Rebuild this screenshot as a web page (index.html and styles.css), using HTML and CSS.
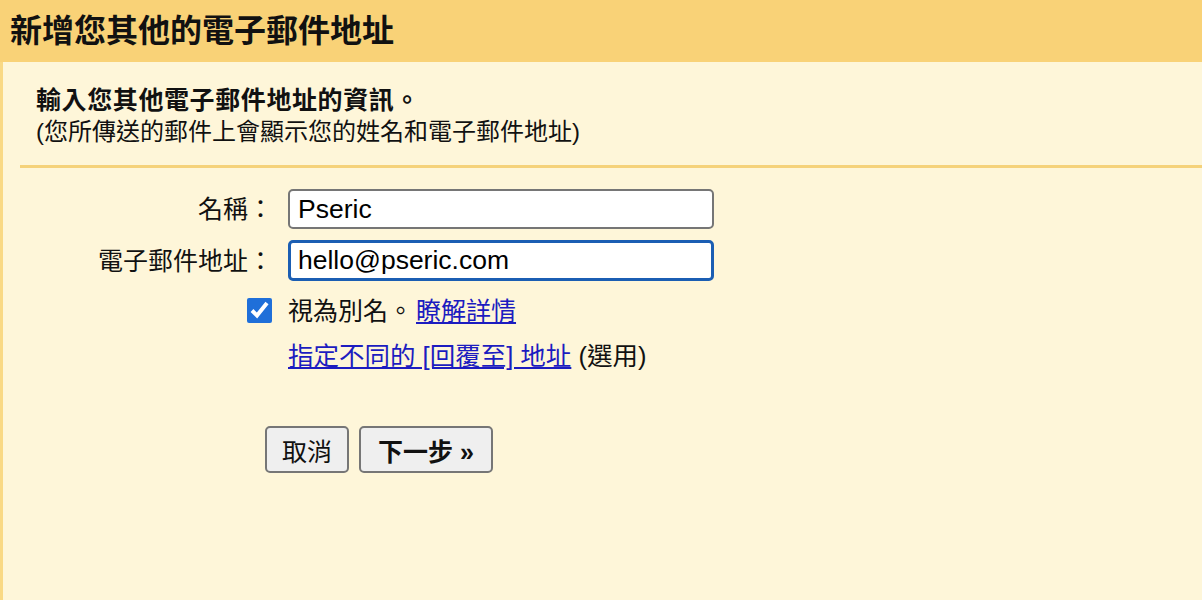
FILE: index.html
```html
<!DOCTYPE html>
<html lang="zh-Hant">
<head>
<meta charset="utf-8">
<title>新增您其他的電子郵件地址</title>
<link rel="stylesheet" href="styles.css">
</head>
<body>
<div class="page">
  <div class="header">
    <h1 class="title">新增您其他的電子郵件地址</h1>
  </div>
  <div class="panel">
    <div class="intro">
      <div class="intro-strong">輸入您其他電子郵件地址的資訊。</div>
      <div class="intro-note">(您所傳送的郵件上會顯示您的姓名和電子郵件地址)</div>
    </div>
    <div class="separator"></div>
    <form class="form">
      <label class="label" for="name">名稱：</label>
      <input class="field" id="name" type="text" value="Pseric">
      <label class="label" for="email">電子郵件地址：</label>
      <input class="field field-focus" id="email" type="text" value="hello@pseric.com">
      <div class="check-cell"><input class="check" type="checkbox" checked></div>
      <div class="line">視為別名。<a class="link link-gap" href="#">瞭解詳情</a></div>
      <div></div>
      <div class="line line-wide"><a class="link" href="#">指定不同的 [回覆至] 地址</a> (選用)</div>
    </form>
    <div class="actions">
      <button class="btn" type="button">取消</button>
      <button class="btn btn-bold" type="button">下一步 »</button>
    </div>
  </div>
</div>
</body>
</html>
```

FILE: styles.css
```css
html, body {
  margin: 0;
  padding: 0;
  height: 100%;
}
body {
  font-family: "Liberation Sans", Arial, "Noto Sans CJK TC", sans-serif;
  color: #111;
  background: #fef6d9;
}
.page {
  display: flex;
  flex-direction: column;
  height: 600px;
  overflow: hidden;
}
.header {
  height: 62px;
  background: #f9d277;
  display: flex;
  align-items: center;
  padding-left: 10px;
  flex-shrink: 0;
}
.title {
  margin: 0;
  font-size: 32px;
  font-weight: bold;
  line-height: 40px;
  color: #111;
}
.panel {
  flex: 1;
  background: #fef6d9;
  border-left: 3px solid #f9d985;
  padding-top: 22px;
}
.intro {
  margin-left: 33px;
  font-size: 24px;
  line-height: 32px;
}
.intro-strong {
  font-weight: bold;
  font-size: 25px;
  letter-spacing: 0.6px;
}
.separator {
  margin: 17px 0 0 17px;
  border-top: 3px solid #f5d27a;
}
.form {
  margin: 21px 0 0 17px;
  display: grid;
  grid-template-columns: 253px 426px;
  grid-template-rows: 40px 41px 37px 32px;
  column-gap: 15px;
  row-gap: 11px;
  align-items: center;
  font-size: 25px;
}
.label {
  text-align: right;
  line-height: 30px;
}
.field {
  box-sizing: border-box;
  width: 426px;
  height: 40px;
  margin: 0;
  border: 2px solid #767676;
  border-radius: 5px;
  background: #fff;
  padding: 0 8px;
  font-family: "Liberation Sans", Arial, sans-serif;
  font-size: 26.5px;
  color: #000;
  outline: none;
}
.field-focus {
  height: 41px;
  border: 3px solid #1b5eb3;
  padding: 0 7px;
}
.check-cell {
  display: flex;
  justify-content: flex-end;
  padding-right: 1px;
}
.check {
  width: 25px;
  height: 25px;
  margin: 0;
  accent-color: #1f6fd9;
}
.line {
  line-height: 30px;
  white-space: nowrap;
}
.line-wide {
  font-size: 25.5px;
}
.link {
  color: #1c1cc0;
  text-decoration: underline;
}
.link-gap {
  margin-left: 3px;
}
.actions {
  display: flex;
  gap: 10px;
  margin: 54px 0 0 262px;
}
.btn {
  height: 47px;
  padding: 0 15px;
  font-family: "Liberation Sans", Arial, "Noto Sans CJK TC", sans-serif;
  font-size: 25px;
  color: #111;
  background: #efefef;
  border: 2px solid #767676;
  border-radius: 5px;
}
.btn-bold {
  font-weight: bold;
  padding: 0 17px;
}
```
